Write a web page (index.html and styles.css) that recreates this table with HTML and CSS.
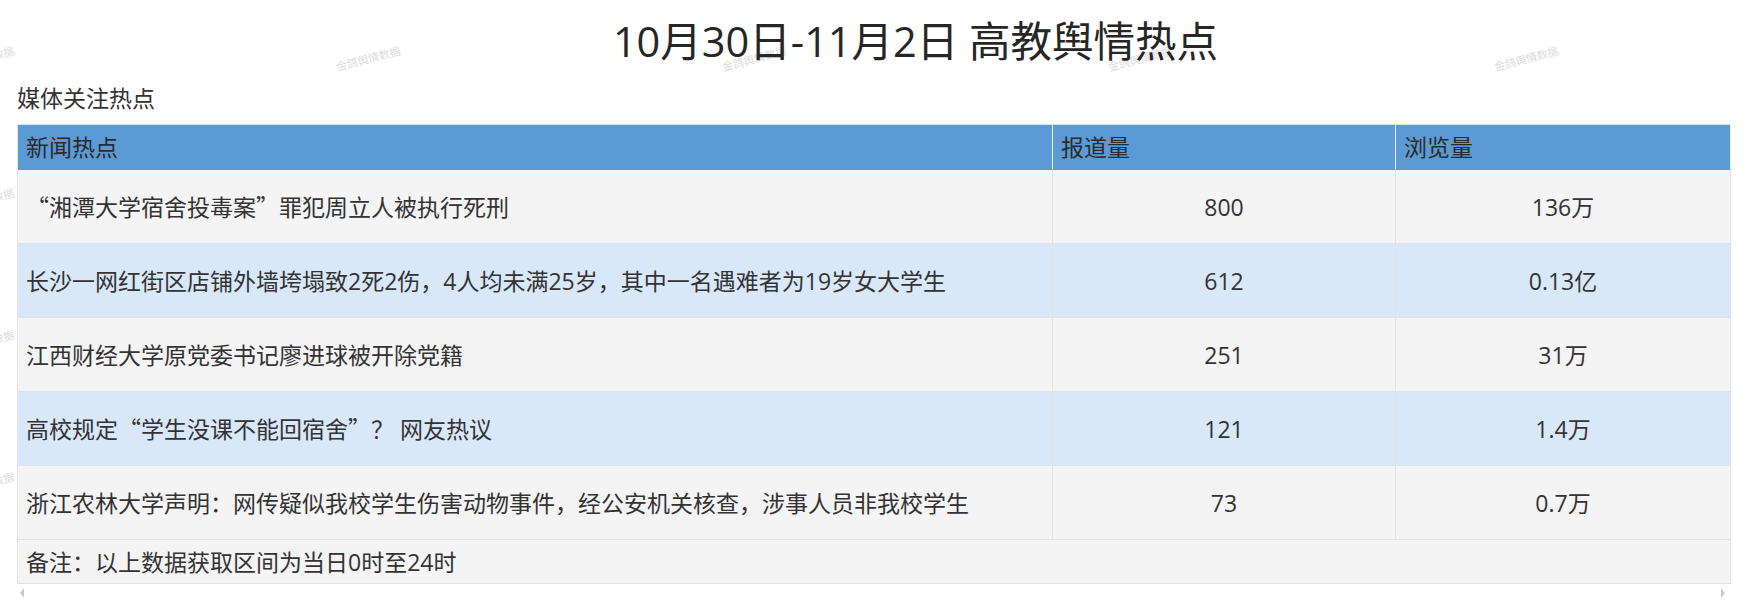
FILE: index.html
```html
<!DOCTYPE html>
<html lang="zh-CN">
<head>
<meta charset="utf-8">
<title>高教舆情热点</title>
<link rel="stylesheet" href="styles.css">
</head>
<body>
<div class="wm-layer" aria-hidden="true">
  <span class="wm">金鸽舆情数据</span><span class="wm">金鸽舆情数据</span><span class="wm">金鸽舆情数据</span><span class="wm">金鸽舆情数据</span><span class="wm">金鸽舆情数据</span>
  <span class="wm">金鸽舆情数据</span><span class="wm">金鸽舆情数据</span><span class="wm">金鸽舆情数据</span><span class="wm">金鸽舆情数据</span><span class="wm">金鸽舆情数据</span>
  <span class="wm">金鸽舆情数据</span><span class="wm">金鸽舆情数据</span><span class="wm">金鸽舆情数据</span><span class="wm">金鸽舆情数据</span><span class="wm">金鸽舆情数据</span>
  <span class="wm">金鸽舆情数据</span><span class="wm">金鸽舆情数据</span><span class="wm">金鸽舆情数据</span><span class="wm">金鸽舆情数据</span><span class="wm">金鸽舆情数据</span>
</div>
<main class="page">
  <h1 class="title">10月30日-11月2日 高教舆情热点</h1>
  <h2 class="subtitle">媒体关注热点</h2>
  <div class="table-wrap">
    <table class="hot">
      <colgroup>
        <col class="c-news">
        <col class="c-count">
        <col class="c-views">
      </colgroup>
      <thead>
        <tr class="head-row">
          <th>新闻热点</th>
          <th>报道量</th>
          <th>浏览量</th>
        </tr>
      </thead>
      <tbody>
        <tr class="row odd">
          <td><span class="q">“</span>湘潭大学宿舍投毒案<span class="q">”</span>罪犯周立人被执行死刑</td>
          <td class="num">800</td>
          <td class="num">136万</td>
        </tr>
        <tr class="row even">
          <td>长沙一网红街区店铺外墙垮塌致2死2伤，4人均未满25岁，其中一名遇难者为19岁女大学生</td>
          <td class="num">612</td>
          <td class="num">0.13亿</td>
        </tr>
        <tr class="row odd">
          <td>江西财经大学原党委书记廖进球被开除党籍</td>
          <td class="num">251</td>
          <td class="num">31万</td>
        </tr>
        <tr class="row even">
          <td>高校规定<span class="q">“</span>学生没课不能回宿舍<span class="q">”</span>？ 网友热议</td>
          <td class="num">121</td>
          <td class="num">1.4万</td>
        </tr>
        <tr class="row odd">
          <td>浙江农林大学声明：网传疑似我校学生伤害动物事件，经公安机关核查，涉事人员非我校学生</td>
          <td class="num">73</td>
          <td class="num">0.7万</td>
        </tr>
        <tr class="note-row">
          <td colspan="3">备注：以上数据获取区间为当日0时至24时</td>
        </tr>
      </tbody>
    </table>
    <div class="scroll-bar" aria-hidden="true">
      <span class="arrow left"></span>
      <span class="arrow right"></span>
    </div>
  </div>
</main>
</body>
</html>
```

FILE: styles.css
```css
* {
  box-sizing: border-box;
}

html, body {
  margin: 0;
  padding: 0;
  background: #ffffff;
}

body {
  position: relative;
  min-height: 607px;
  overflow: hidden;
  font-family: "Open Sans", "Noto Sans CJK SC", sans-serif;
  color: #333333;
}

/* watermark layer (behind the content) */
.wm-layer {
  position: absolute;
  left: -211px;
  top: -13px;
  display: grid;
  grid-template-columns: repeat(5, 386px);
  grid-auto-rows: 142px;
  z-index: 0;
  pointer-events: none;
}

.wm {
  display: flex;
  align-items: center;
  justify-content: center;
  font-family: "Noto Sans CJK SC", sans-serif;
  font-size: 11px;
  color: #dcdcdc;
  transform: rotate(-15deg);
  white-space: nowrap;
}

.page {
  position: relative;
  z-index: 1;
  padding: 0 24px 0 17px;
}

.title {
  margin: 0;
  padding: 10px 0 0 85px;
  height: 73px;
  line-height: 63px;
  font-size: 41.5px;
  font-weight: 400;
  text-align: center;
  color: #262626;
}

.subtitle {
  margin: 0 0 11px;
  padding-top: 10px;
  height: 40px;
  line-height: 30px;
  font-size: 23px;
  font-weight: 400;
  color: #333333;
}

.table-wrap {
  width: 1713px;
}

.hot {
  width: 1713px;
  table-layout: fixed;
  border-collapse: separate;
  border-spacing: 0;
  border-top: 1px solid #e2e2e2;
  border-left: 1px solid #e2e2e2;
  font-size: 23px;
}

.c-news { width: 1035px; }
.c-count { width: 343px; }
.c-views { width: 335px; }

.hot th,
.hot td {
  padding: 0 8px;
  border-right: 1px solid #e2e2e2;
  border-bottom: 1px solid #e2e2e2;
  text-align: left;
  font-weight: 400;
  white-space: nowrap;
  vertical-align: middle;
  line-height: 30px;
}

.head-row {
  height: 45px;
}

.head-row th {
  background: #5b9ad5;
  color: #2b2b2b;
  border-right-color: #e9eef5;
  border-bottom-color: #5b9ad5;
}

.row {
  height: 74px;
}

.row.odd td {
  background: #f3f4f3;
}

.row.even td {
  background: #d9e8f9;
}

.hot td.num {
  text-align: center;
}

.q {
  font-family: "Noto Sans CJK SC", sans-serif;
  font-feature-settings: "fwid" 1;
}

.note-row {
  height: 44px;
}

.note-row td {
  background: #f3f4f3;
}

.scroll-bar {
  display: flex;
  justify-content: space-between;
  align-items: center;
  margin-top: 4px;
  height: 10px;
  padding: 0 5px 0 3px;
}

.arrow {
  width: 0;
  height: 0;
  border-top: 5px solid transparent;
  border-bottom: 5px solid transparent;
}

.arrow.left {
  border-right: 4px solid #c9c9c9;
}

.arrow.right {
  border-left: 4px solid #c9c9c9;
}
```
